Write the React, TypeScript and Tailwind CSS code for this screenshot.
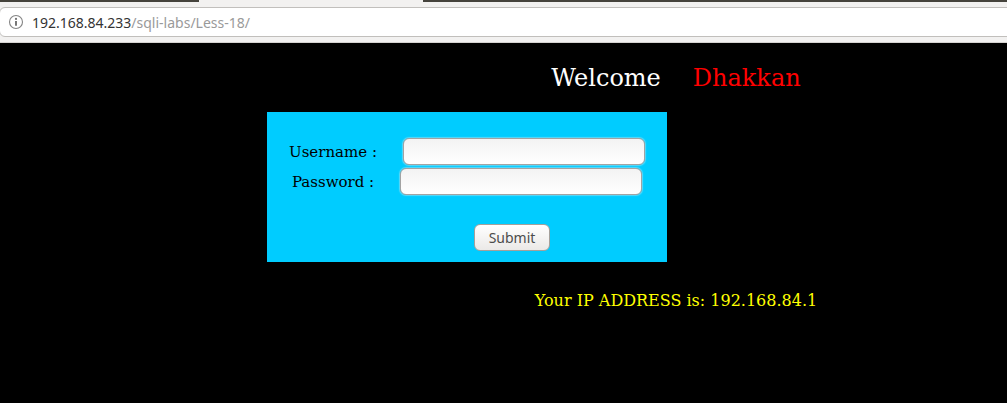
function InfoIcon() {
  return (
    <svg width="16" height="16" viewBox="0 0 16 16" fill="none" aria-hidden="true">
      <circle cx="8" cy="8" r="6.5" stroke="#858585" strokeWidth="1.1" />
      <circle cx="8" cy="4.9" r="1.1" fill="#707070" />
      <path d="M8 7v4.8" stroke="#707070" strokeWidth="1.9" />
    </svg>
  );
}

function BrowserBar() {
  return (
    <header className="border-b border-[#d5d3d0] bg-[#f2f1f0]">
      <div className="flex h-[2px]">
        <div className="w-[199px] bg-[#45433c]" />
        <div className="w-56" />
        <div className="flex-1 bg-[#45433c]" />
      </div>
      <div className="pt-[5px] pb-[5px]">
        <div className="-mr-2 -ml-px flex h-[30px] items-center gap-2 rounded-md border border-[#c1bfbc] bg-white pl-2 font-['Noto_Sans',sans-serif] text-sm">
          <button type="button" aria-label="Site information">
            <InfoIcon />
          </button>
          <div className="pt-px whitespace-nowrap text-[#9a9a9a]">
            <span className="text-[#333333]">192.168.84.233</span>/sqli-labs/Less-18/
          </div>
        </div>
      </div>
    </header>
  );
}

function Field({ id, label, type }: { id: string; label: string; type: string }) {
  return (
    <div className="flex items-center justify-center gap-[26px]">
      <label htmlFor={id} className="text-[15px] leading-5 text-black">
        {label}
      </label>
      <input
        id={id}
        name={id}
        type={type}
        className="h-[27px] w-[242px] rounded-md border border-[#a3a3a3] bg-linear-to-b from-[#f3f3f3] to-white px-2 shadow-[0_0_1px_1px_#5cd8f8] outline-none"
      />
    </div>
  );
}

export default function App() {
  return (
    <div className="flex min-h-screen flex-col overflow-x-hidden bg-black font-['DejaVu_Serif',serif]">
      <BrowserBar />
      <main className="pt-[21px]">
        <h1 className="flex justify-center gap-8 pl-[345px] text-2xl leading-7">
          <span className="text-white">Welcome</span>
          <span className="text-[#ff0000]">Dhakkan</span>
        </h1>
        <form
          className="mt-5 ml-[267px] flex h-[150px] w-[400px] flex-col gap-[3px] bg-[#00ccff] pt-[26px]"
          onSubmit={(event) => event.preventDefault()}
        >
          <Field id="uname" label="Username :" type="text" />
          <Field id="passwd" label="Password :" type="password" />
          <button
            type="submit"
            className="mt-[26px] ml-[207px] h-[27px] w-[76px] rounded-md border border-[#a5a09b] bg-linear-to-b from-white to-[#ebe9e7] font-['Noto_Sans',sans-serif] text-sm text-[#4c4c4c]"
          >
            Submit
          </button>
        </form>
        <p className="mt-[27px] pl-[345px] text-center text-base text-[#ffff00]">
          Your IP ADDRESS is: 192.168.84.1
        </p>
      </main>
    </div>
  );
}
